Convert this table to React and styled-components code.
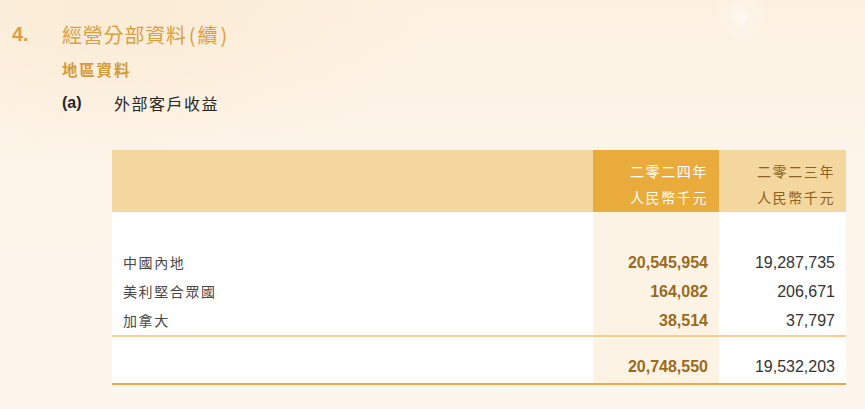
import React from "react";
import styled, { createGlobalStyle } from "styled-components";

const rows = [
  { label: "中國內地", cur: "20,545,954", prev: "19,287,735" },
  { label: "美利堅合眾國", cur: "164,082", prev: "206,671" },
  { label: "加拿大", cur: "38,514", prev: "37,797" },
];

const App = () => {
  return (
    <>
      <GlobalStyle />
      <Page>
        <Heading>
          <SectionNo>4.</SectionNo>
          <SectionTitle>
            經營分部資料<Paren>(</Paren>續<Paren>)</Paren>
          </SectionTitle>
        </Heading>
        <SubHeading>地區資料</SubHeading>
        <ItemHeading>
          <ItemNo>(a)</ItemNo>
          <ItemTitle>外部客戶收益</ItemTitle>
        </ItemHeading>

        <Table>
          <HeaderRow>
            <HeaderCell />
            <HeaderCell $current>
              <div>二零二四年</div>
              <div>人民幣千元</div>
            </HeaderCell>
            <HeaderCell>
              <div>二零二三年</div>
              <div>人民幣千元</div>
            </HeaderCell>
          </HeaderRow>
          <SpacerRow>
            <div />
            <Cell $current />
            <div />
          </SpacerRow>
          {rows.map((r) => (
            <BodyRow key={r.label}>
              <Label>{r.label}</Label>
              <Num $current>{r.cur}</Num>
              <Num>{r.prev}</Num>
            </BodyRow>
          ))}
          <TotalRow>
            <Label />
            <Num $current>20,748,550</Num>
            <Num>19,532,203</Num>
          </TotalRow>
        </Table>
      </Page>
    </>
  );
};

export default App;

const GlobalStyle = createGlobalStyle`
  html, body {
    margin: 0;
    padding: 0;
    background: #fdf5ea;
  }
  body {
    font-family: "Liberation Sans", "Noto Sans CJK TC", sans-serif;
  }
`;

const Page = styled.div`
  width: 865px;
  height: 409px;
  overflow: hidden;
  box-sizing: border-box;
  padding-top: 20px;
  background:
    radial-gradient(circle at 741px 17px, rgba(255, 255, 255, 0.75) 0, rgba(255, 255, 255, 0.25) 8px, rgba(255, 255, 255, 0) 28px),
    radial-gradient(ellipse 320px 160px at 120px 10px, rgba(250, 232, 205, 0.6), rgba(250, 232, 205, 0) 100%),
    linear-gradient(180deg, #fcf1e1 0%, #fdf5ea 45%, #fdf6ed 100%);
`;

const Heading = styled.div`
  display: flex;
  align-items: center;
  height: 28px;
  color: #d9a043;
`;

const SectionNo = styled.div`
  width: 62px;
  padding-left: 12px;
  box-sizing: border-box;
  font-family: "Liberation Sans", sans-serif;
  font-weight: bold;
  font-size: 20px;
`;

const SectionTitle = styled.div`
  font-family: "Noto Sans CJK TC", sans-serif;
  font-size: 20px;
  letter-spacing: 0.8px;
`;

const Paren = styled.span`
  padding: 0 2px;
  letter-spacing: 0;
`;

const SubHeading = styled.div`
  margin: 9px 0 0 62px;
  height: 24px;
  line-height: 24px;
  font-family: "Noto Sans CJK TC", sans-serif;
  font-weight: bold;
  font-size: 15.5px;
  letter-spacing: 1.8px;
  color: #d29a3c;
`;

const ItemHeading = styled.div`
  display: flex;
  align-items: center;
  margin: 10px 0 0 62px;
  height: 24px;
  color: #262626;
`;

const ItemNo = styled.div`
  width: 52px;
  font-family: "Liberation Sans", sans-serif;
  font-weight: bold;
  font-size: 16px;
`;

const ItemTitle = styled.div`
  font-family: "Noto Sans CJK TC", sans-serif;
  font-size: 16px;
  letter-spacing: 1.5px;
`;

const Table = styled.div`
  margin: 35px 0 0 112px;
  width: 734px;
  background: #ffffff;
  border-bottom: 2px solid #e8ab47;
`;

const Grid = styled.div`
  display: grid;
  grid-template-columns: 1fr 126px 127px;
`;

const HeaderRow = styled(Grid)`
  background: #f4d69f;
`;

const HeaderCell = styled.div`
  padding: 8px 11px 2px 0;
  text-align: right;
  font-family: "Noto Sans CJK TC", sans-serif;
  font-size: 14px;
  line-height: 26px;
  letter-spacing: 1.6px;
  background: ${(p) => (p.$current ? "#e9ab3b" : "transparent")};
  color: ${(p) => (p.$current ? "#ffffff" : "#8a6322")};
`;

const Cell = styled.div`
  background: ${(p) => (p.$current ? "#fdf3e5" : "transparent")};
`;

const SpacerRow = styled(Grid)`
  height: 36px;
`;

const BodyRow = styled(Grid)`
  line-height: 29px;
  &:nth-of-type(5) > * {
    border-bottom: 2px solid #f6cf8c;
  }
`;

const TotalRow = styled(Grid)`
  line-height: 29px;
  & > * {
    padding-top: 15px;
    padding-bottom: 2px;
  }
`;

const Label = styled.div`
  padding-left: 11px;
  font-family: "Noto Sans CJK TC", sans-serif;
  font-size: 14px;
  letter-spacing: 1.6px;
  color: #484848;
`;

const Num = styled(Cell)`
  padding-right: 11px;
  text-align: right;
  font-family: "Liberation Sans", sans-serif;
  font-size: 16px;
  font-weight: ${(p) => (p.$current ? "bold" : "normal")};
  color: ${(p) => (p.$current ? "#9a6a1f" : "#333333")};
`;
